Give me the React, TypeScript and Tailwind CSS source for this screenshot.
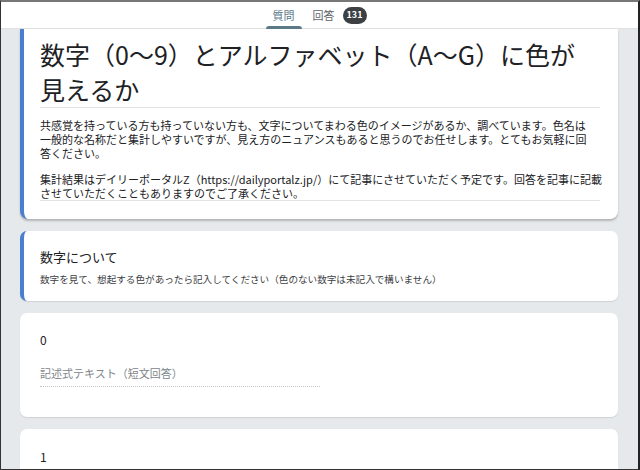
const jp = { fontFamily: '"Noto Sans CJK JP", "Noto Sans", sans-serif' };

function Header() {
  return (
    <div className="flex h-[27px] shrink-0 items-stretch justify-center border-b border-[#e0e0e0] bg-white">
      <div className="mr-[7px] flex items-stretch gap-[11px] text-[11px]">
        <div className="relative flex items-center px-[7px] text-[#5b7a88]">
          質問
          <span className="absolute bottom-[-1px] left-0 right-0 h-[3px] rounded-t-[3px] bg-[#5b7a88]" />
        </div>
        <div className="flex items-center gap-[8px] text-[#5f6368]">
          回答
          <span className="flex h-[17px] w-[24px] items-center justify-center rounded-full bg-[#3c4043] text-[9px] font-bold text-white">
            131
          </span>
        </div>
      </div>
    </div>
  );
}

export default function App() {
  return (
    <div
      className="flex h-[470px] w-[640px] flex-col overflow-hidden border-t-2 border-r-2 border-b border-l border-t-[#777] border-r-[#222] border-b-[#333] border-l-[#333] bg-[#e6e9eb] text-[#202124]"
      style={jp}
    >
      <Header />
      <div className="ml-[19px] flex w-[598px] flex-col gap-[12px]">
        {/* form title card, scrolled so its top sits under the tab bar */}
        <div className="rounded-b-[8px] border-l-4 border-l-[#4a7fd0] bg-white pt-[8px] pr-[18px] pb-[18px] pl-[16px] shadow-[0_2px_2px_rgba(0,0,0,0.22)]">
          <h1 className="border-b border-[#e3e3e3] text-[25px] leading-[35px] font-normal whitespace-nowrap">
            数字（0〜9）とアルファベット（A〜G）に色が
            <br />
            見えるか
          </h1>
          <div className="mt-[10px] border-b border-[#e3e3e3] text-[11px] leading-[14px] whitespace-nowrap">
            <p>
              共感覚を持っている方も持っていない方も、文字についてまわる色のイメージがあるか、調べています。色名は
              <br />
              一般的な名称だと集計しやすいですが、見え方のニュアンスもあると思うのでお任せします。とてもお気軽に回
              <br />
              答ください。
            </p>
            <p className="mt-[12px]">
              集計結果はデイリーポータルZ（https://dailyportalz.jp/）にて記事にさせていただく予定です。回答を記事に記載
              <br />
              させていただくこともありますのでご了承ください。
            </p>
          </div>
        </div>

        <div className="h-[70px] rounded-[7px] border-l-4 border-l-[#4a7fd0] bg-white pt-[17px] pl-[16px] shadow-[0_1px_1px_rgba(0,0,0,0.1)]">
          <p className="text-[13px] leading-[18px]">数字について</p>
          <p className="mt-[7px] text-[9.6px] leading-[13px] text-[#3c4043]">
            数字を見て、想起する色があったら記入してください（色のない数字は未記入で構いません）
          </p>
        </div>

        <div className="h-[104px] rounded-[7px] bg-white pt-[19px] pl-[20px] shadow-[0_1px_1px_rgba(0,0,0,0.1)]">
          <p className="text-[12px] leading-[16px]">0</p>
          <div className="mt-[17px] w-[280px] border-b border-dotted border-[#c4c7c9] pb-[5px] text-[11px] leading-[16px] text-[#80868b]">
            記述式テキスト（短文回答）
          </div>
        </div>

        <div className="h-[104px] rounded-[7px] bg-white pt-[20px] pl-[20px] shadow-[0_1px_1px_rgba(0,0,0,0.1)]">
          <p className="text-[12px] leading-[16px]">1</p>
        </div>
      </div>
    </div>
  );
}
